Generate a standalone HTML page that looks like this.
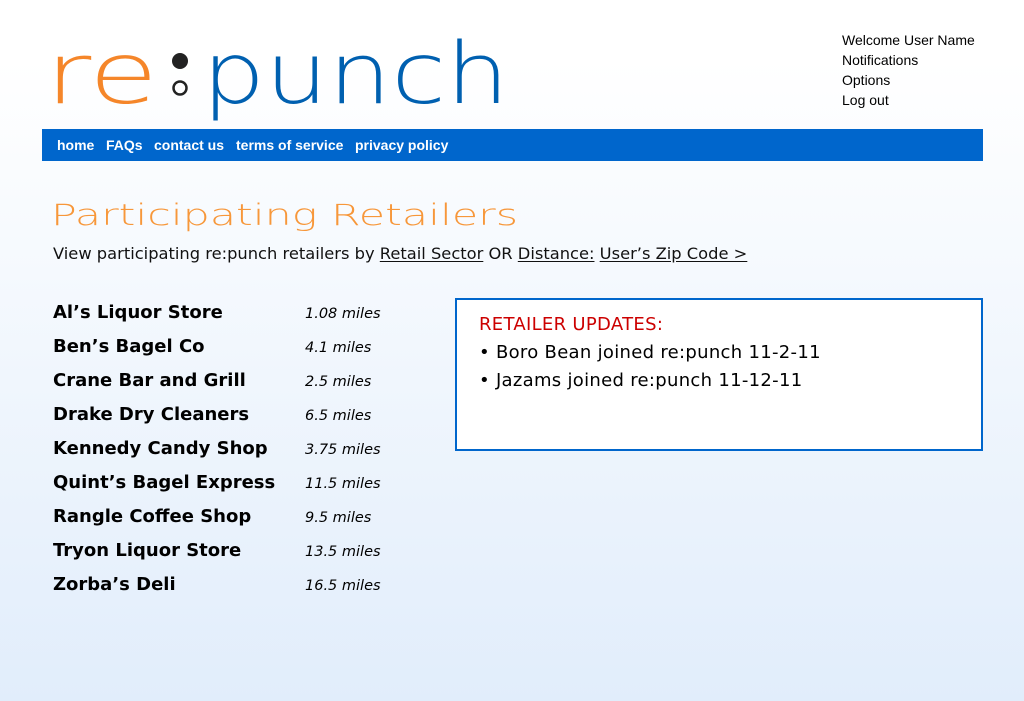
<!DOCTYPE html>
<html><head><meta charset="utf-8"><style>
body{margin:0;width:1024px;height:701px;overflow:hidden;background:linear-gradient(#fff 0px,#fff 60px,#e1edfb 701px);font-family:"DejaVu Sans","Liberation Sans",sans-serif;position:relative}
.a{position:absolute;white-space:nowrap}
.user{left:842px;top:30px;font-family:"Liberation Sans",sans-serif;font-size:14px;line-height:20px;color:#000}
.nav{left:42px;top:129px;width:941px;height:32px;background:#0066cc}
.nav span{position:absolute;top:8px;color:#fff;font-family:"Liberation Sans",sans-serif;font-weight:bold;font-size:14px}
.intro{left:53px;top:244px;font-size:16.3px;color:#111}
.intro u{text-underline-offset:2px}
.name{left:53px;font-weight:bold;font-size:18px;color:#000}
.dist{left:305px;font-style:italic;font-size:14.5px;color:#000}
.box{left:455px;top:298px;width:524px;height:149px;border:2px solid #0066cc;background:#fff}
.box div{position:absolute;left:22px;font-size:18px;letter-spacing:0.3px;white-space:nowrap}
</style></head><body>
<svg class="a" style="left:0;top:0" width="560" height="130">
<text x="45" y="103" font-family="DejaVu Sans" font-weight="200" font-size="85" fill="#f5862a" textLength="113" lengthAdjust="spacingAndGlyphs">re</text>
<circle cx="180" cy="61" r="8" fill="#222"/>
<circle cx="180" cy="88" r="6.5" fill="none" stroke="#222" stroke-width="2.5"/>
<text x="202" y="103" font-family="DejaVu Sans" font-weight="200" font-size="85" fill="#0060b0" textLength="307" lengthAdjust="spacingAndGlyphs">punch</text>
</svg>
<div class="a user">Welcome User Name<br>Notifications<br>Options<br>Log out</div>
<div class="a nav"><span style="left:15px">home</span><span style="left:64px">FAQs</span><span style="left:112px">contact us</span><span style="left:194px">terms of service</span><span style="left:313px">privacy policy</span></div>
<svg class="a" style="left:0;top:185px" width="560" height="50">
<text x="51" y="40" font-family="DejaVu Sans" font-weight="200" font-size="29" fill="#f7973a" textLength="467" lengthAdjust="spacingAndGlyphs">Participating Retailers</text>
</svg>
<div class="a intro">View participating re:punch retailers by <u>Retail Sector</u> OR <u>Distance:</u> <u>User’s Zip Code &gt;</u></div>
<div class="a name" style="top:302px">Al’s Liquor Store</div><div class="a dist" style="top:306px">1.08 miles</div>
<div class="a name" style="top:336px">Ben’s Bagel Co</div><div class="a dist" style="top:340px">4.1 miles</div>
<div class="a name" style="top:370px">Crane Bar and Grill</div><div class="a dist" style="top:374px">2.5 miles</div>
<div class="a name" style="top:404px">Drake Dry Cleaners</div><div class="a dist" style="top:408px">6.5 miles</div>
<div class="a name" style="top:438px">Kennedy Candy Shop</div><div class="a dist" style="top:442px">3.75 miles</div>
<div class="a name" style="top:472px">Quint’s Bagel Express</div><div class="a dist" style="top:476px">11.5 miles</div>
<div class="a name" style="top:506px">Rangle Coffee Shop</div><div class="a dist" style="top:510px">9.5 miles</div>
<div class="a name" style="top:540px">Tryon Liquor Store</div><div class="a dist" style="top:544px">13.5 miles</div>
<div class="a name" style="top:574px">Zorba’s Deli</div><div class="a dist" style="top:578px">16.5 miles</div>
<div class="a box">
<div style="top:14px;color:#cc0000">RETAILER UPDATES:</div>
<div style="top:42px;color:#000">• Boro Bean joined re:punch 11-2-11</div>
<div style="top:70px;color:#000">• Jazams joined re:punch 11-12-11</div>
</div>
</body></html>
